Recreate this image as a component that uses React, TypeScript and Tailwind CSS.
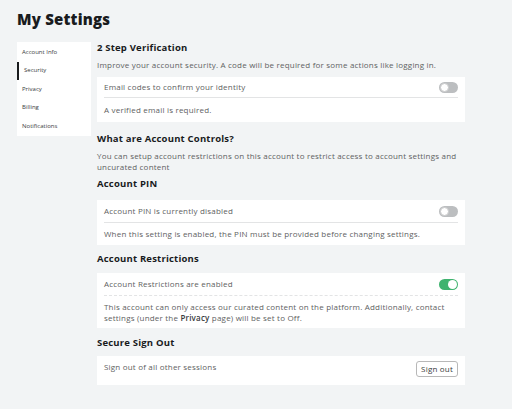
import React from 'react';

const font = { fontFamily: '"Open Sans", "Noto Sans", Arial, sans-serif' };

const navItems = ['Account Info', 'Security', 'Privacy', 'Billing', 'Notifications'];

const Toggle = ({ on }: { on?: boolean }) => (
  <div className={`flex h-[11px] w-[19px] items-center rounded-full px-[1px] ${on ? 'justify-end bg-[#3fb36f]' : 'justify-start bg-[#bcbec0]'}`}>
    <div className={`h-[9px] w-[9px] rounded-full bg-white ${on ? '' : 'border border-[#c9cacb]'}`} />
  </div>
);

const Heading = ({ children, className = '' }: { children: React.ReactNode; className?: string }) => (
  <h2 className={`h-[14px] text-[9.5px] font-bold leading-[14px] tracking-[0.2px] text-[#191b1d] ${className}`}>{children}</h2>
);

export default function App() {
  return (
    <div className="min-h-[409px] w-full bg-[#f2f4f5] text-[#393b3d]" style={font}>
      <div className="px-[17px] pt-[8px]">
        <h1 className="h-[22px] text-[15px] font-extrabold leading-[22px] tracking-[0.2px] text-[#191b1d]">My Settings</h1>
        <div className="mt-[12px] flex gap-[6px]">
          <nav className="h-[94px] w-[74px] shrink-0 bg-white pt-[1px]">
            {navItems.map((item) => (
              <div
                key={item}
                className={`flex h-[18.5px] items-center pl-[5px] text-[6px] text-[#393b3d] ${item === 'Security' ? 'border-l-2 border-[#191b1d] pl-[3px]' : ''}`}
              >
                {item}
              </div>
            ))}
          </nav>

          <main className="w-[368px] -mt-[1px] text-[8px] tracking-[0.2px] text-[#606162]">
            <Heading>2 Step Verification</Heading>
            <p className="mt-[4px] leading-[11px]">
              Improve your account security. A code will be required for some actions like logging in.
            </p>
            <div className="mt-[7px] bg-white px-[7px]">
              <div className="flex h-[21px] items-center justify-between border-b border-[#e3e4e5]">
                <span>Email codes to confirm your identity</span>
                <Toggle />
              </div>
              <div className="flex h-[24px] items-center">A verified email is required.</div>
            </div>

            <Heading className="mt-[10px]">What are Account Controls?</Heading>
            <p className="mt-[4px] leading-[11px]">
              You can setup account restrictions on this account to restrict access to account settings and uncurated content
            </p>

            <Heading className="mt-[5px]">Account PIN</Heading>
            <div className="mt-[9px] bg-white px-[7px]">
              <div className="flex h-[23px] items-center justify-between border-b border-[#e3e4e5]">
                <span>Account PIN is currently disabled</span>
                <Toggle />
              </div>
              <div className="flex h-[22px] items-center">
                When this setting is enabled, the PIN must be provided before changing settings.
              </div>
            </div>

            <Heading className="mt-[7px]">Account Restrictions</Heading>
            <div className="mt-[7px] bg-white px-[7px]">
              <div className="flex h-[23px] items-center justify-between border-b border-dashed border-[#e3e4e5]">
                <span>Account Restrictions are enabled</span>
                <Toggle on />
              </div>
              <p className="py-[5px] leading-[11px]">
                This account can only access our curated content on the platform. Additionally, contact settings (under the{' '}
                <span className="font-semibold text-[#393b3d]">Privacy</span> page) will be set to Off.
              </p>
            </div>

            <Heading className="mt-[8px]">Secure Sign Out</Heading>
            <div className="mt-[6px] flex h-[29px] items-start justify-between bg-white px-[7px] pt-[5px]">
              <span className="leading-[11px]">Sign out of all other sessions</span>
              <button className="h-[16px] rounded-[3px] border border-[#b8b8b8] px-[4px] leading-none text-[#393b3d]">
                Sign out
              </button>
            </div>
          </main>
        </div>
      </div>
    </div>
  );
}
